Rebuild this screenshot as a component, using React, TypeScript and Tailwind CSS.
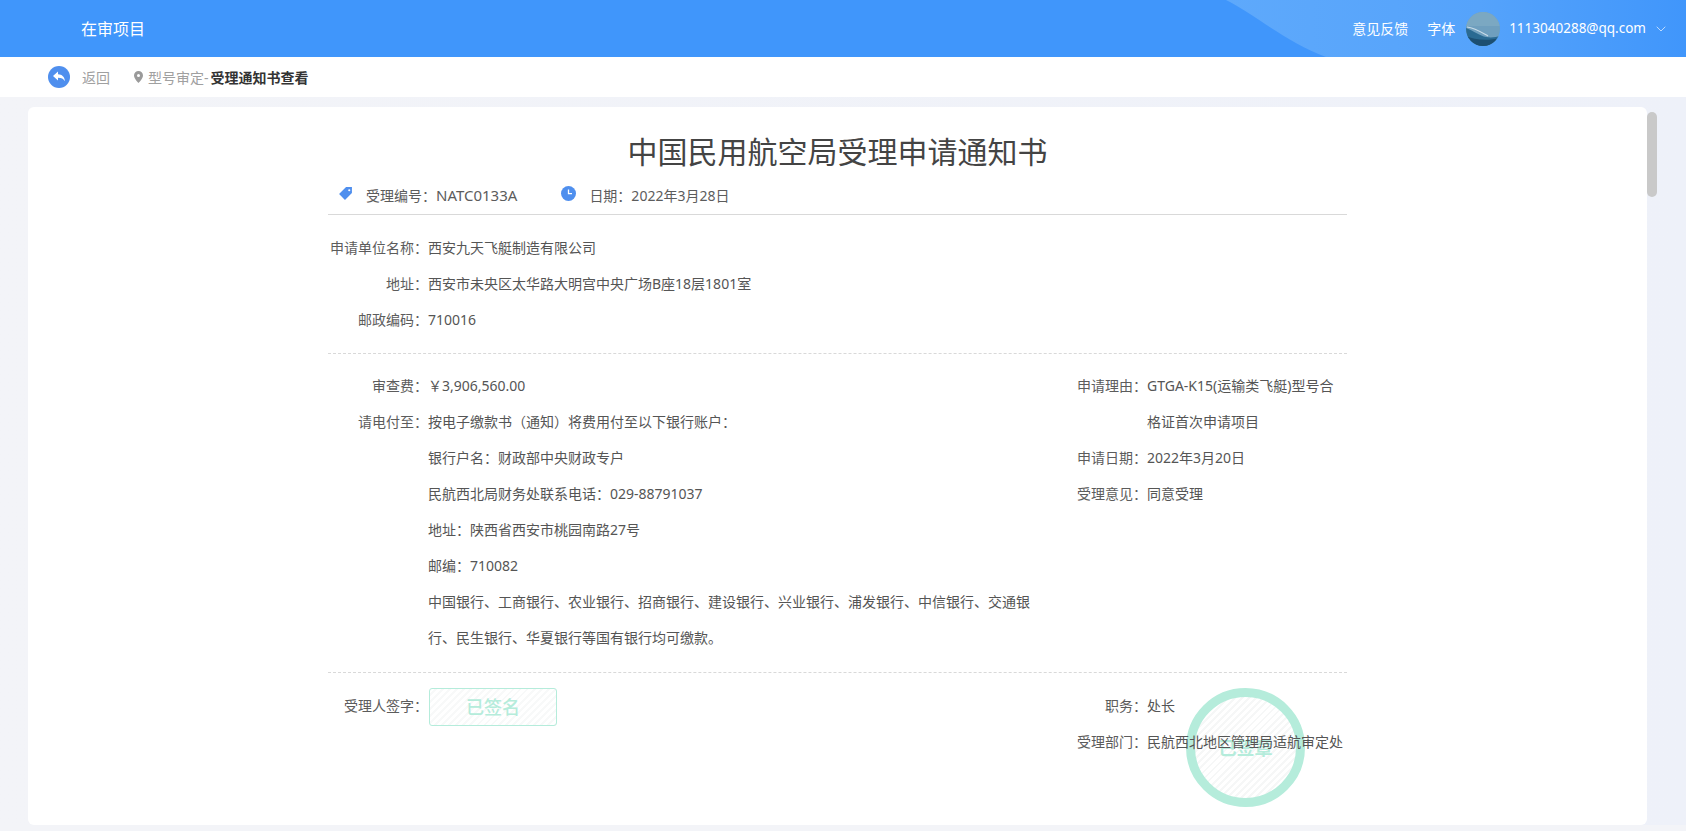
import { ChevronDown } from "lucide-react"

const font = "font-['Noto_Sans','Noto_Sans_CJK_SC',sans-serif]"

function Row({ label, width, children }: { label?: string; width: string; children: React.ReactNode }) {
  return (
    <div className="flex">
      <div className={`${width} shrink-0 text-right text-[#5c5c5c]`}>{label ? `${label}：` : ""}</div>
      <div className="flex-1 text-[#555]">{children}</div>
    </div>
  )
}

function Avatar() {
  return (
    <svg width="34" height="34" viewBox="0 0 34 34" className="rounded-full">
      <rect width="34" height="34" fill="#6f9fbe" />
      <path d="M0 0h34v14H0z" fill="#7ba8c2" />
      <path d="M0 16c8 3 14 8 20 9s10 0 14-1v10H0z" fill="#2a6a92" />
      <path d="M0 24c8 4 22 5 34 2v8H0z" fill="#1c4f72" />
      <path d="M1 15c8 1 14 5 21 9" stroke="#c9dce8" strokeWidth="1.2" fill="none" />
    </svg>
  )
}

function BackIcon() {
  return (
    <svg width="22" height="22" viewBox="0 0 22 22">
      <circle cx="11" cy="11" r="11" fill="#4f8fee" />
      <path d="M5 10l5-4.500v2.800c4 .2 6.500 2.500 7 7-1.500-2.500-3.500-3.500-7-3.500v2.800z" fill="#fff" />
    </svg>
  )
}

export default function App() {
  return (
    <div lang="zh-CN" className={`${font} h-[831px] w-[1686px] overflow-hidden bg-[#f3f4f8] text-[14px]`}>
      <header className="relative flex h-[57px] items-center justify-between overflow-hidden bg-[#4096fb] pl-[81px] pr-[17px] text-white">
        {/* light swoosh behind the right side of the bar */}
        <svg className="absolute right-0 top-0" width="460" height="57" viewBox="0 0 460 57">
          <defs>
            <linearGradient id="swoosh" x1="0" x2="1" y1="0" y2="0">
              <stop offset="0" stopColor="#5ea9fb" />
              <stop offset="0.55" stopColor="#55a3fb" />
              <stop offset="1" stopColor="#4096fb" />
            </linearGradient>
          </defs>
          <path d="M0 0c25 12 60 42 100 57h360V0z" fill="url(#swoosh)" />
        </svg>
        <div className="relative text-[16px]">在审项目</div>
        <div className="relative flex items-center">
          <span>意见反馈</span>
          <span className="ml-[19px]">字体</span>
          <span className="ml-[11px] flex"><Avatar /></span>
          <span className="ml-[9px] text-[13.5px]">1113040288@qq.com</span>
          <ChevronDown size={16} strokeWidth={1.25} className="ml-[7px] text-[#d5e7fd]" />
        </div>
      </header>

      <div className="flex h-[40px] items-center bg-white pl-[48px]">
        <BackIcon />
        <span className="ml-[12px] text-[#a0a0a0]">返回</span>
        <svg className="ml-[24px]" width="9" height="12" viewBox="0 0 9 12">
          <path fillRule="evenodd" d="M4.500 0a4.500 4.500 0 0 1 4.500 4.500C9 7.500 4.500 12 4.500 12S0 7.500 0 4.500A4.500 4.500 0 0 1 4.500 0zm0 3a1.500 1.500 0 1 0 0 3 1.500 1.500 0 0 0 0-3z" fill="#9a9a9a" />
        </svg>
        <span className="ml-[5px] text-[#a0a0a0]">型号审定-</span>
        <span className="ml-[2px] font-bold text-[#333]">受理通知书查看</span>
      </div>

      <div className="bg-gradient-to-r from-[#f3f4f8] to-[#eef1f9] pl-[28px] pr-[39px] pt-[10px]">
        <div className="relative flex h-[718px] rounded-[6px] bg-white">
          <div className="flex-1 pl-[300px] pr-[300px] leading-[36px]">
            <h1 className="pt-[23px] text-center text-[30px] leading-[44px] font-normal text-[#444]">中国民用航空局受理申请通知书</h1>
            <div className="mt-[5px] flex h-[36px] items-center border-b border-[#d9d9d9] pb-[2px] pl-[10px] text-[#5c5c5c]">
              <svg width="15" height="15" viewBox="0 0 14 14" className="mb-[5px]">
                <path fillRule="evenodd" d="M7.500 1H13v5.500L6.500 13 1 7.500zM10.500 3a1 1 0 1 0 0 2 1 1 0 0 0 0-2z" fill="#4f8fee" />
              </svg>
              <span className="ml-[13px]">受理编号：<span className="text-[15px]">NATC0133A</span></span>
              <svg width="15" height="15" viewBox="0 0 15 15" className="mb-[4px] ml-[44px]">
                <circle cx="7.500" cy="7.500" r="7.500" fill="#4f8fee" />
                <path d="M7.500 3.500v4.200h3.500" stroke="#fff" strokeWidth="1.300" fill="none" />
              </svg>
              <span className="ml-[13px]">日期：2022年3月28日</span>
            </div>

            <div className="mt-[15px] border-b border-dashed border-[#d9d9d9] pb-[15px]">
              <Row label="申请单位名称" width="w-[100px]">西安九天飞艇制造有限公司</Row>
              <Row label="地址" width="w-[100px]">西安市未央区太华路大明宫中央广场B座18层1801室</Row>
              <Row label="邮政编码" width="w-[100px]">710016</Row>
            </div>

            <div className="flex border-b border-dashed border-[#d9d9d9] pb-[16px] pt-[14px]">
              <div className="w-[749px] shrink-0">
                <Row label="审查费" width="w-[100px]">￥3,906,560.00</Row>
                <Row label="请电付至" width="w-[100px]">按电子缴款书（通知）将费用付至以下银行账户：</Row>
                <Row width="w-[100px]">银行户名：财政部中央财政专户</Row>
                <Row width="w-[100px]">民航西北局财务处联系电话：029-88791037</Row>
                <Row width="w-[100px]">地址：陕西省西安市桃园南路27号</Row>
                <Row width="w-[100px]">邮编：710082</Row>
                <Row width="w-[100px]">
                  <div className="w-[610px]">中国银行、工商银行、农业银行、招商银行、建设银行、兴业银行、浦发银行、中信银行、交通银行、民生银行、华夏银行等国有银行均可缴款。</div>
                </Row>
              </div>
              <div className="flex-1">
                <Row label="申请理由" width="w-[70px]">GTGA-K15(运输类飞艇)型号合格证首次申请项目</Row>
                <Row label="申请日期" width="w-[70px]">2022年3月20日</Row>
                <Row label="受理意见" width="w-[70px]">同意受理</Row>
              </div>
            </div>

            <div className="relative flex pt-[15px]">
              <div className="flex w-[749px] shrink-0">
                <div className="w-[100px] text-right text-[#5c5c5c]">受理人签字：</div>
                <div className="ml-[1px] flex h-[38px] w-[128px] items-center justify-center rounded-[3px] border-[1.5px] border-[#b5ecdb] bg-[repeating-linear-gradient(135deg,#fff_0px,#fff_3px,#f8f9f9_3px,#f8f9f9_5px)] text-[18px] font-medium text-[#b5ecdb]">已签名</div>
              </div>
              <div className="relative z-10 flex-1">
                <Row label="职务" width="w-[70px]">处长</Row>
                <Row label="受理部门" width="w-[70px]"><span className="whitespace-nowrap">民航西北地区管理局适航审定处</span></Row>
              </div>
              <div className="absolute left-[858px] top-[15px] flex h-[119px] w-[119px] items-center justify-center rounded-full border-[9px] border-[#b5ecdb] bg-[repeating-linear-gradient(135deg,#fff_0px,#fff_3px,#f6f7f7_3px,#f6f7f7_5px)] text-[18px] font-bold text-[#b5ecdb]">已签章</div>
            </div>
          </div>
          <div className="absolute right-[-10px] top-[5px] h-[85px] w-[10px] rounded-full bg-[#c9c9c9]" />
        </div>
      </div>
    </div>
  )
}
